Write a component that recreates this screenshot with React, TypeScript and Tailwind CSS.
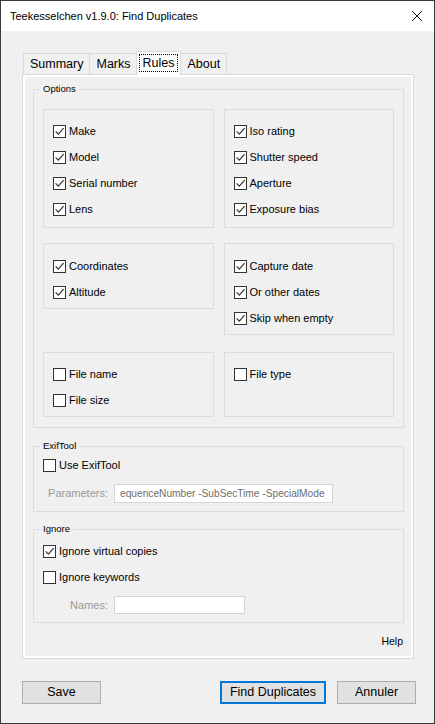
import React from "react";

// Windows-style "Find Duplicates" dialog, Rules tab

function Check({ label, checked, h = "h-[26px]" }: { label: string; checked?: boolean; h?: string }) {
  return (
    <div className={`flex items-center ${h}`}>
      <span className="w-[13px] h-[13px] border border-[#333333] bg-white flex items-center justify-center shrink-0">
        {checked && (
          <svg width="11" height="11" viewBox="0 0 11 11">
            <path d="M1.6 5.4 L4.3 8.2 L9.6 2.2" fill="none" stroke="#333333" strokeWidth="1.2" />
          </svg>
        )}
      </span>
      <span className="ml-[3px] text-[11px] text-black">{label}</span>
    </div>
  );
}

function Box({ children, h }: { children: React.ReactNode; h: string }) {
  return <div className={`border border-[#dcdcdc] pl-[9px] ${h}`}>{children}</div>;
}

function Group({ title, children, className = "" }: { title: string; children: React.ReactNode; className?: string }) {
  return (
    <fieldset className={`border border-[#dcdcdc] ml-[8px] w-[371px] ${className}`}>
      <legend className="ml-[6px] px-[3px] text-[9.5px] leading-[14px] text-black">{title}</legend>
      {children}
    </fieldset>
  );
}

function Tab({ label }: { label: string }) {
  return (
    <div className="h-[21px] border border-b-0 border-[#d9d9d9] bg-[#f0f0f0] px-[6px] flex items-center text-[12.5px] text-black -mr-px">
      {label}
    </div>
  );
}

function Button({ label, w, primary }: { label: string; w: string; primary?: boolean }) {
  return (
    <div
      className={`${w} h-[23px] bg-[#e1e1e1] flex items-center justify-center text-[12.5px] text-black ${
        primary ? "border-2 border-[#0078d7]" : "border border-[#adadad]"
      }`}
    >
      {label}
    </div>
  );
}

export default function App() {
  return (
    <div
      className="w-[435px] h-[724px] bg-[#f0f0f0] border border-[#3a3a3a] flex flex-col overflow-hidden"
      style={{ fontFamily: '"Liberation Sans", Arial, sans-serif' }}
    >
      {/* title bar */}
      <div className="h-[30px] bg-white flex items-center justify-between pl-[9px] pr-[9px] shrink-0">
        <span className="text-[11px] text-black">Teekesselchen v1.9.0: Find Duplicates</span>
        <svg width="12" height="12" viewBox="0 0 12 12" className="mr-[2px]">
          <path d="M1 1 L11 11 M11 1 L1 11" stroke="#111111" strokeWidth="1" />
        </svg>
      </div>

      {/* tabs */}
      <div className="flex items-end ml-[22px] mt-[20px] h-[23px] relative z-10">
        <Tab label="Summary" />
        <Tab label="Marks" />
        <div className="h-[24px] -mb-px border border-b-0 border-[#d9d9d9] bg-white px-[2px] pt-[2px] pb-[3px] -ml-[1px] -mr-[1px] relative">
          <div className="h-full border border-dotted border-black px-[3px] flex items-center text-[12.5px] text-black">
            Rules
          </div>
        </div>
        <Tab label="About" />
      </div>

      {/* panel */}
      <div className="ml-[21px] w-[392px] h-[585px] border border-[#d9d9d9]">
        <div className="h-full border-2 border-white bg-[#f0f0f0] flex flex-col">
          <Group title="Options" className="mt-[5px]">
            <div className="px-[9px] pt-[13px] pb-[10px]">
              <div className="grid grid-cols-2 gap-x-[10px]">
                <Box h="h-[119px] pt-[8px]">
                  <Check label="Make" checked />
                  <Check label="Model" checked />
                  <Check label="Serial number" checked />
                  <Check label="Lens" checked />
                </Box>
                <Box h="h-[119px] pt-[8px]">
                  <Check label="Iso rating" checked />
                  <Check label="Shutter speed" checked />
                  <Check label="Aperture" checked />
                  <Check label="Exposure bias" checked />
                </Box>
              </div>
              <div className="grid grid-cols-2 gap-x-[10px] items-start mt-[15px]">
                <Box h="h-[66px] pt-[9px]">
                  <Check label="Coordinates" checked />
                  <Check label="Altitude" checked />
                </Box>
                <Box h="h-[92px] pt-[9px]">
                  <Check label="Capture date" checked />
                  <Check label="Or other dates" checked />
                  <Check label="Skip when empty" checked />
                </Box>
              </div>
              <div className="grid grid-cols-2 gap-x-[10px] mt-[17px]">
                <Box h="h-[65px] pt-[8px]">
                  <Check label="File name" />
                  <Check label="File size" />
                </Box>
                <Box h="h-[65px] pt-[8px]">
                  <Check label="File type" />
                </Box>
              </div>
            </div>
          </Group>

          <Group title="ExifTool" className="mt-[11px]">
            <div className="pl-[9px] pb-[8px]">
              <Check label="Use ExifTool" h="h-[24px]" />
              <div className="flex items-center mt-[7px]">
                <span className="w-[71px] text-right pr-[6px] text-[11px] text-[#999999]">Parameters:</span>
                <div className="w-[219px] h-[19px] bg-white border border-[#d4d4d4] flex items-center pl-[5px] overflow-hidden whitespace-nowrap text-[10.2px] text-[#6d6d6d]">
                  equenceNumber -SubSecTime -SpecialMode
                </div>
              </div>
            </div>
          </Group>

          <Group title="Ignore" className="mt-[10px]">
            <div className="pl-[9px] pt-[2px] pb-[8px]">
              <Check label="Ignore virtual copies" checked />
              <Check label="Ignore keywords" />
              <div className="flex items-center mt-[6px]">
                <span className="w-[71px] text-right pr-[6px] text-[11px] text-[#999999]">Names:</span>
                <div className="w-[131px] h-[18px] bg-white border border-[#d4d4d4]" />
              </div>
            </div>
          </Group>

          <div className="mt-[11px] w-[378px] text-right text-[10.5px] leading-[14px] text-black">Help</div>
        </div>
      </div>

      {/* buttons */}
      <div className="flex items-center mt-[22px] ml-[21px]">
        <Button label="Save" w="w-[79px]" />
        <div className="ml-[119px]">
          <Button label="Find Duplicates" w="w-[106px]" primary />
        </div>
        <div className="ml-[11px]">
          <Button label="Annuler" w="w-[79px]" />
        </div>
      </div>
    </div>
  );
}
